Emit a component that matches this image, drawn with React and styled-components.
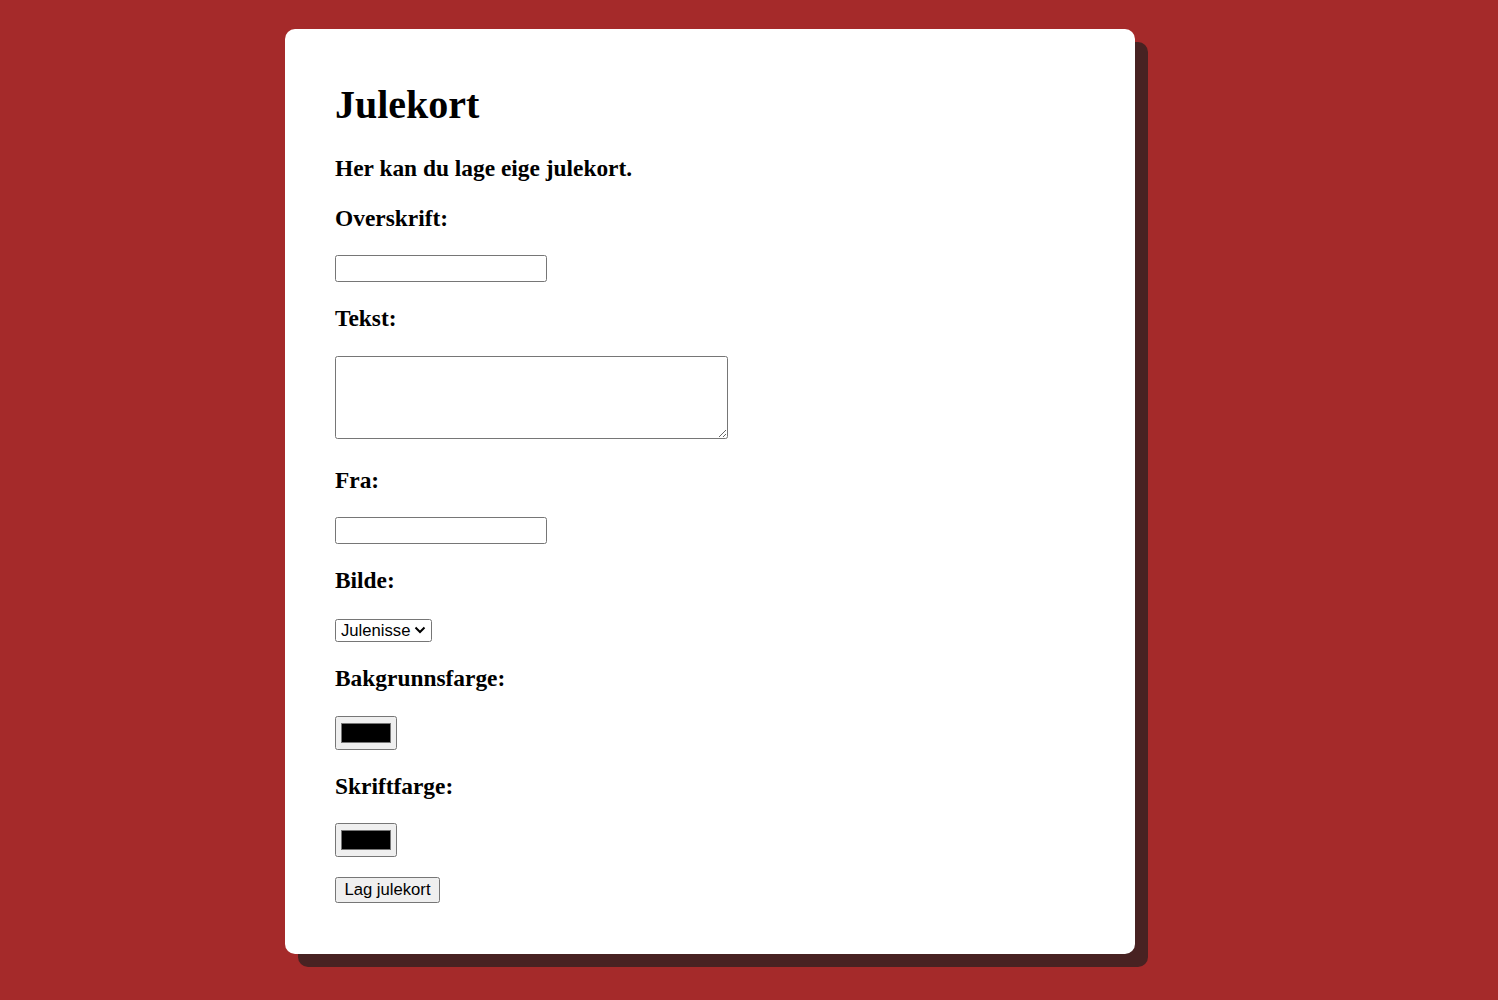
import React, { useState } from 'react';
import styled, { createGlobalStyle } from 'styled-components';

const GlobalStyle = createGlobalStyle`
  html, body {
    margin: 0;
    padding: 0;
    background: #a52a2a;
  }
  body {
    font-family: 'Liberation Serif', 'Times New Roman', serif;
    color: #000;
  }
`;

const chevron =
  "data:image/svg+xml,%3Csvg xmlns='http://www.w3.org/2000/svg' width='12' height='8' viewBox='0 0 12 8'%3E%3Cpath d='M1.5 1.5 L6 6 L10.5 1.5' fill='none' stroke='%23000' stroke-width='2'/%3E%3C/svg%3E";

const Page = styled.div`
  min-height: 1000px;
  box-sizing: border-box;
  padding: 29px 0 0 285px;
`;

const Card = styled.div`
  width: 850px;
  box-sizing: border-box;
  padding: 25px 50px 51px;
  background: #fff;
  border-radius: 10px;
  box-shadow: 13px 13px 0 #482222;
  display: flow-root;
`;

const Title = styled.h1`
  font-size: 40px;
  font-weight: bold;
  margin: 26.8px 0;
`;

const Heading = styled.h3`
  font-size: 23.4px;
  font-weight: bold;
  margin: 23.4px 0;
`;

const Row = styled.div`
  display: flex;
  padding-top: ${(p) => p.$top || 0}px;
  padding-bottom: ${(p) => p.$extra || 0}px;
  margin-bottom: ${(p) => p.$after || 0}px;
`;

const TextInput = styled.input`
  width: 212px;
  height: 27px;
  box-sizing: border-box;
  border: 1px solid #767676;
  border-radius: 2.5px;
  font-family: 'Liberation Sans', Arial, sans-serif;
  font-size: 16.67px;
  padding: 1px 3px;
  margin: 0;
`;

const TextArea = styled.textarea`
  width: 393px;
  height: 83px;
  box-sizing: border-box;
  border: 1px solid #767676;
  border-radius: 2.5px;
  font-family: 'Liberation Mono', monospace;
  font-size: 16.67px;
  margin: 0;
`;

const Select = styled.select`
  appearance: none;
  width: 97px;
  height: 23px;
  box-sizing: border-box;
  font-family: 'Liberation Sans', Arial, sans-serif;
  font-size: 16.67px;
  line-height: 21px;
  border: 1px solid #767676;
  border-radius: 2.5px;
  background: #fff url("${chevron}") no-repeat right 5px center / 12px 8px;
  color: #000;
  padding: 0 0 0 5px;
  margin: 0;
`;

const ColorInput = styled.input`
  width: 62px;
  height: 34px;
  box-sizing: border-box;
  padding: 6px 5px;
  border: 1px solid #767676;
  border-radius: 2.5px;
  background: #efefef;
  margin: 0;
  cursor: pointer;
  &::-webkit-color-swatch-wrapper {
    padding: 0;
  }
  &::-webkit-color-swatch {
    border: 1px solid #777;
    border-radius: 0;
  }
`;

const Button = styled.button`
  width: 105px;
  height: 26px;
  box-sizing: border-box;
  padding: 0;
  font-family: 'Liberation Sans', Arial, sans-serif;
  font-size: 16.67px;
  color: #000;
  background: #efefef;
  border: 1px solid #767676;
  border-radius: 2.5px;
  margin: 0;
`;

function App() {
  const [bg, setBg] = useState('#000000');
  const [fg, setFg] = useState('#000000');

  return (
    <Page>
      <GlobalStyle />
      <Card>
        <Title>Julekort</Title>
        <Heading>Her kan du lage eige julekort.</Heading>

        <Heading>Overskrift:</Heading>
        <Row $after={-1}>
          <TextInput type='text' />
        </Row>

        <Heading>Tekst:</Heading>
        <Row $top={1} $extra={4}>
          <TextArea />
        </Row>

        <Heading>Fra:</Heading>
        <Row>
          <TextInput type='text' />
        </Row>

        <Heading>Bilde:</Heading>
        <Row $top={1}>
          <Select defaultValue='nisse'>
            <option value='nisse'>Julenisse</option>
            <option value='tre'>Juletre</option>
            <option value='snomann'>Snømann</option>
          </Select>
        </Row>

        <Heading>Bakgrunnsfarge:</Heading>
        <Row>
          <ColorInput
            type='color'
            value={bg}
            onChange={(e) => setBg(e.target.value)}
          />
        </Row>

        <Heading>Skriftfarge:</Heading>
        <Row $extra={20}>
          <ColorInput
            type='color'
            value={fg}
            onChange={(e) => setFg(e.target.value)}
          />
        </Row>

        <Row>
          <Button>Lag julekort</Button>
        </Row>
      </Card>
    </Page>
  );
}

export default App;
